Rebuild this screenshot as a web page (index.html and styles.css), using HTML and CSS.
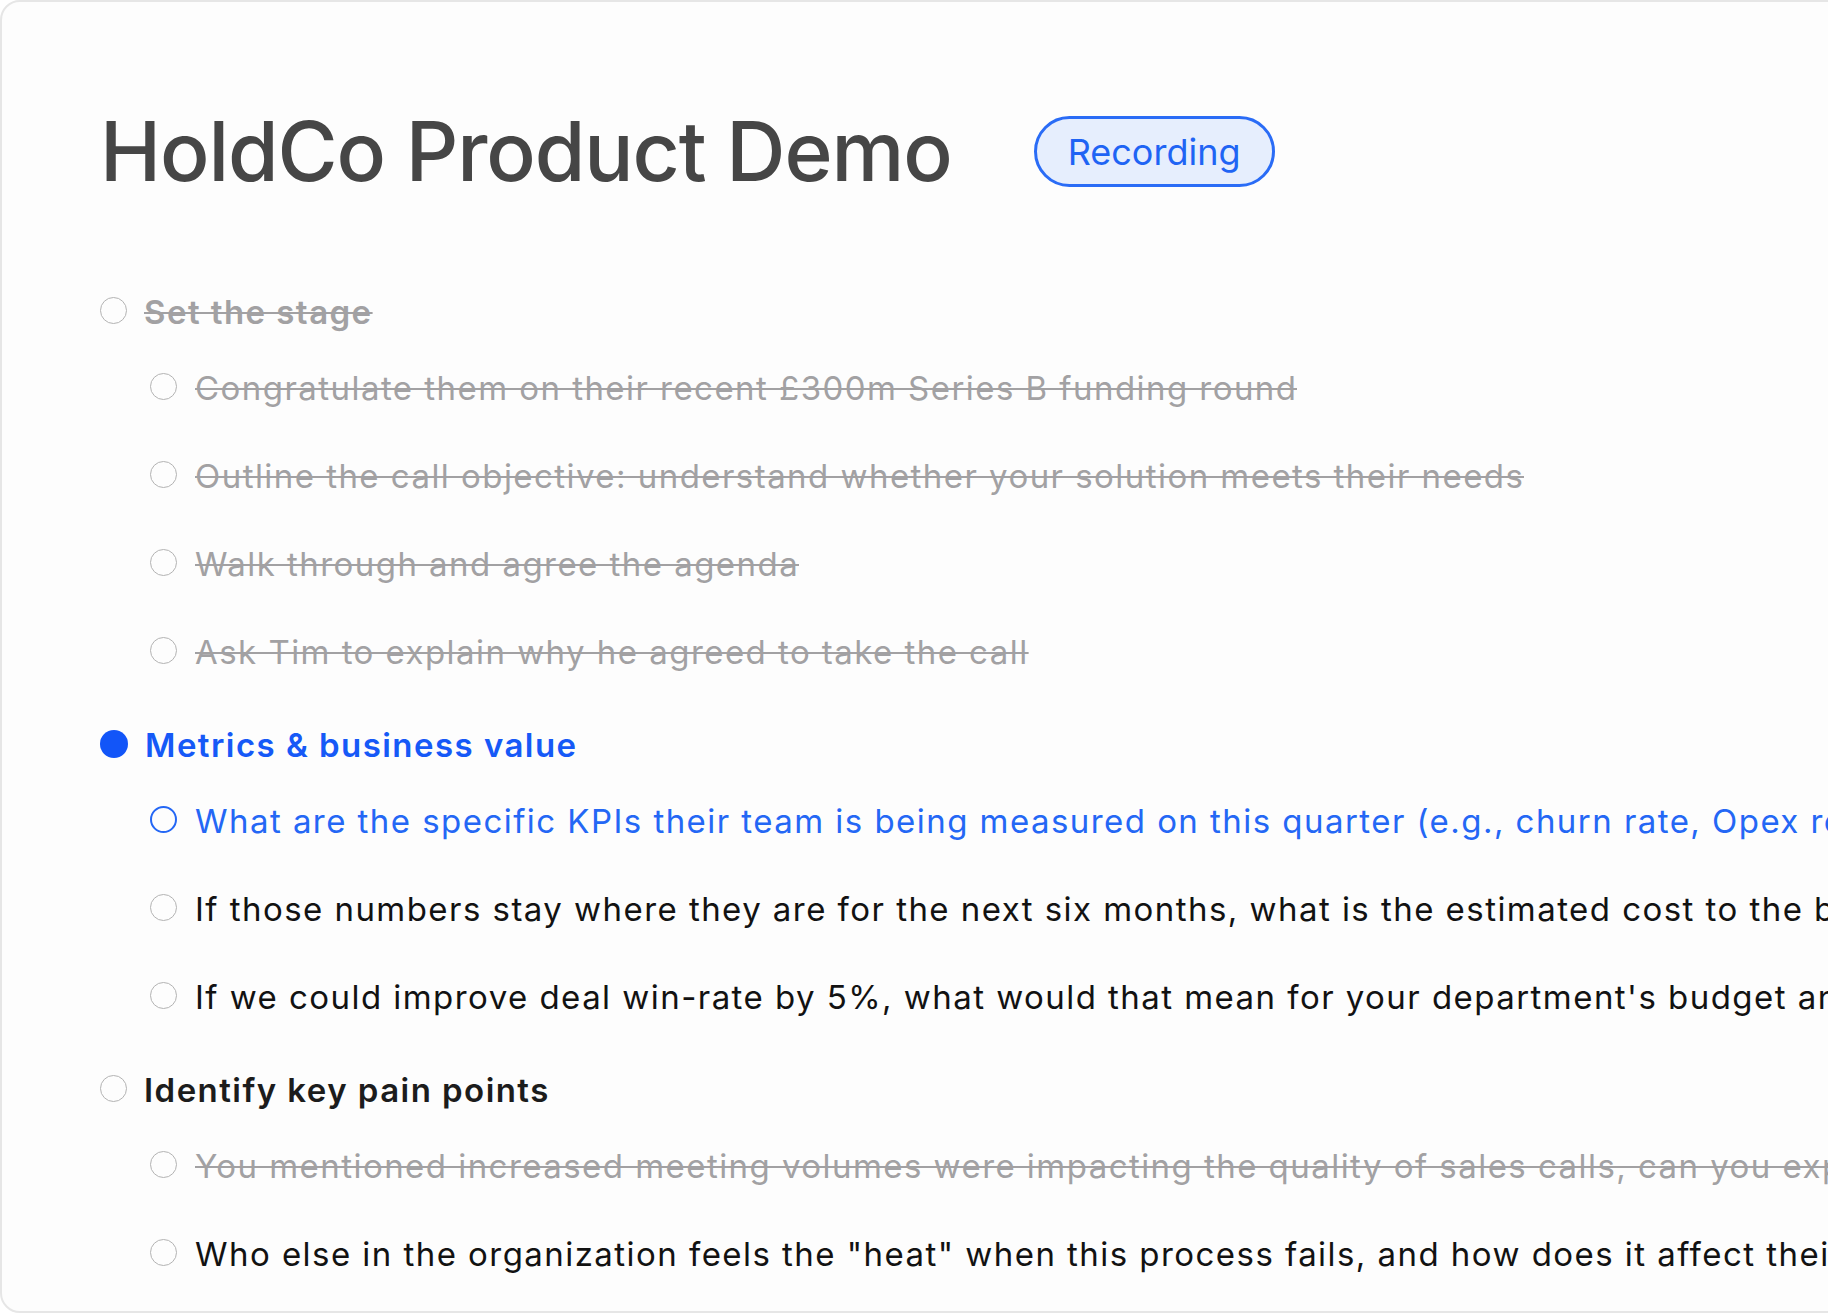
FILE: index.html
```html
<!DOCTYPE html>
<html lang="en">
<head>
<meta charset="utf-8">
<title>HoldCo Product Demo</title>
<link rel="stylesheet" href="styles.css">
</head>
<body>
<main class="card">
  <header class="header">
    <h1 class="title">HoldCo Product Demo</h1>
    <span class="badge">Recording</span>
  </header>

  <section class="group">
    <div class="row heading done">
      <span class="dot"></span>
      <span class="label">Set the stage</span>
    </div>
    <div class="row sub done"><span class="dot"></span><span class="label">Congratulate them on their recent £300m Series B funding round</span></div>
    <div class="row sub done"><span class="dot"></span><span class="label">Outline the call objective: understand whether your solution meets their needs</span></div>
    <div class="row sub done"><span class="dot"></span><span class="label">Walk through and agree the agenda</span></div>
    <div class="row sub done"><span class="dot"></span><span class="label">Ask Tim to explain why he agreed to take the call</span></div>
  </section>

  <section class="group">
    <div class="row heading current">
      <span class="dot filled"></span>
      <span class="label">Metrics &amp; business value</span>
    </div>
    <div class="row sub active"><span class="dot"></span><span class="label">What are the specific KPIs their team is being measured on this quarter (e.g., churn rate, Opex reduction)?</span></div>
    <div class="row sub"><span class="dot"></span><span class="label">If those numbers stay where they are for the next six months, what is the estimated cost to the business?</span></div>
    <div class="row sub"><span class="dot"></span><span class="label">If we could improve deal win-rate by 5%, what would that mean for your department's budget and targets?</span></div>
  </section>

  <section class="group">
    <div class="row heading">
      <span class="dot"></span>
      <span class="label">Identify key pain points</span>
    </div>
    <div class="row sub done"><span class="dot"></span><span class="label">You mentioned increased meeting volumes were impacting the quality of sales calls, can you explain more?</span></div>
    <div class="row sub"><span class="dot"></span><span class="label">Who else in the organization feels the "heat" when this process fails, and how does it affect their work?</span></div>
  </section>
</main>
</body>
</html>
```

FILE: styles.css
```css
* { box-sizing: border-box; }

html, body {
  margin: 0;
  padding: 0;
  background: #ffffff;
  overflow: hidden;
}

body {
  font-family: Inter, "Noto Sans", "Liberation Sans", sans-serif;
  width: 1828px;
  height: 1314px;
}

.card {
  width: 1900px;
  height: 1313px;
  border: 2px solid #e6e6e6;
  border-radius: 20px;
  background: #fdfdfd;
  padding: 0 0 0 98px;
  overflow: hidden;
}

.header {
  display: flex;
  align-items: center;
  gap: 82px;
  margin-top: 100px;
}

.title {
  margin: 0;
  font-size: 82px;
  font-weight: 500;
  line-height: 1.21;
  color: #464646;
  letter-spacing: -1.1px;
  white-space: nowrap;
}

.badge {
  display: inline-flex;
  align-items: center;
  height: 71px;
  padding: 0 31px;
  border: 3px solid #2a6cf6;
  border-radius: 36px;
  background: #e6eefd;
  color: #1f64f4;
  font-size: 36px;
  font-weight: 400;
  white-space: nowrap;
}

.group:first-of-type { margin-top: 79px; }
.group + .group { margin-top: 17px; }

.row {
  display: flex;
  align-items: center;
  white-space: nowrap;
  letter-spacing: 1.45px;
}

.label {
  overflow: hidden;
  text-overflow: clip;
}

.heading {
  height: 64px;
  gap: 17px;
  font-size: 33px;
  font-weight: 600;
  color: #1c1c1c;
}

.sub {
  height: 88px;
  gap: 18px;
  padding-left: 50px;
  font-size: 33px;
  font-weight: 400;
  color: #121212;
}

.dot {
  flex: none;
  width: 27px;
  height: 27px;
  border-radius: 50%;
  border: 1.5px solid #b3b3b3;
  background: transparent;
  margin-bottom: 3px;
}

.sub .dot { margin-bottom: 4px; }

.done .label {
  color: #a2a1a3;
  text-decoration: line-through;
  text-decoration-thickness: 2px;
}

.current { color: #1659f7; }

.dot.filled {
  width: 28px;
  height: 28px;
  border: none;
  background: #1255f8;
}

.active { color: #2467f5; }

.active .dot {
  border: 2.5px solid #2467f5;
}
```
